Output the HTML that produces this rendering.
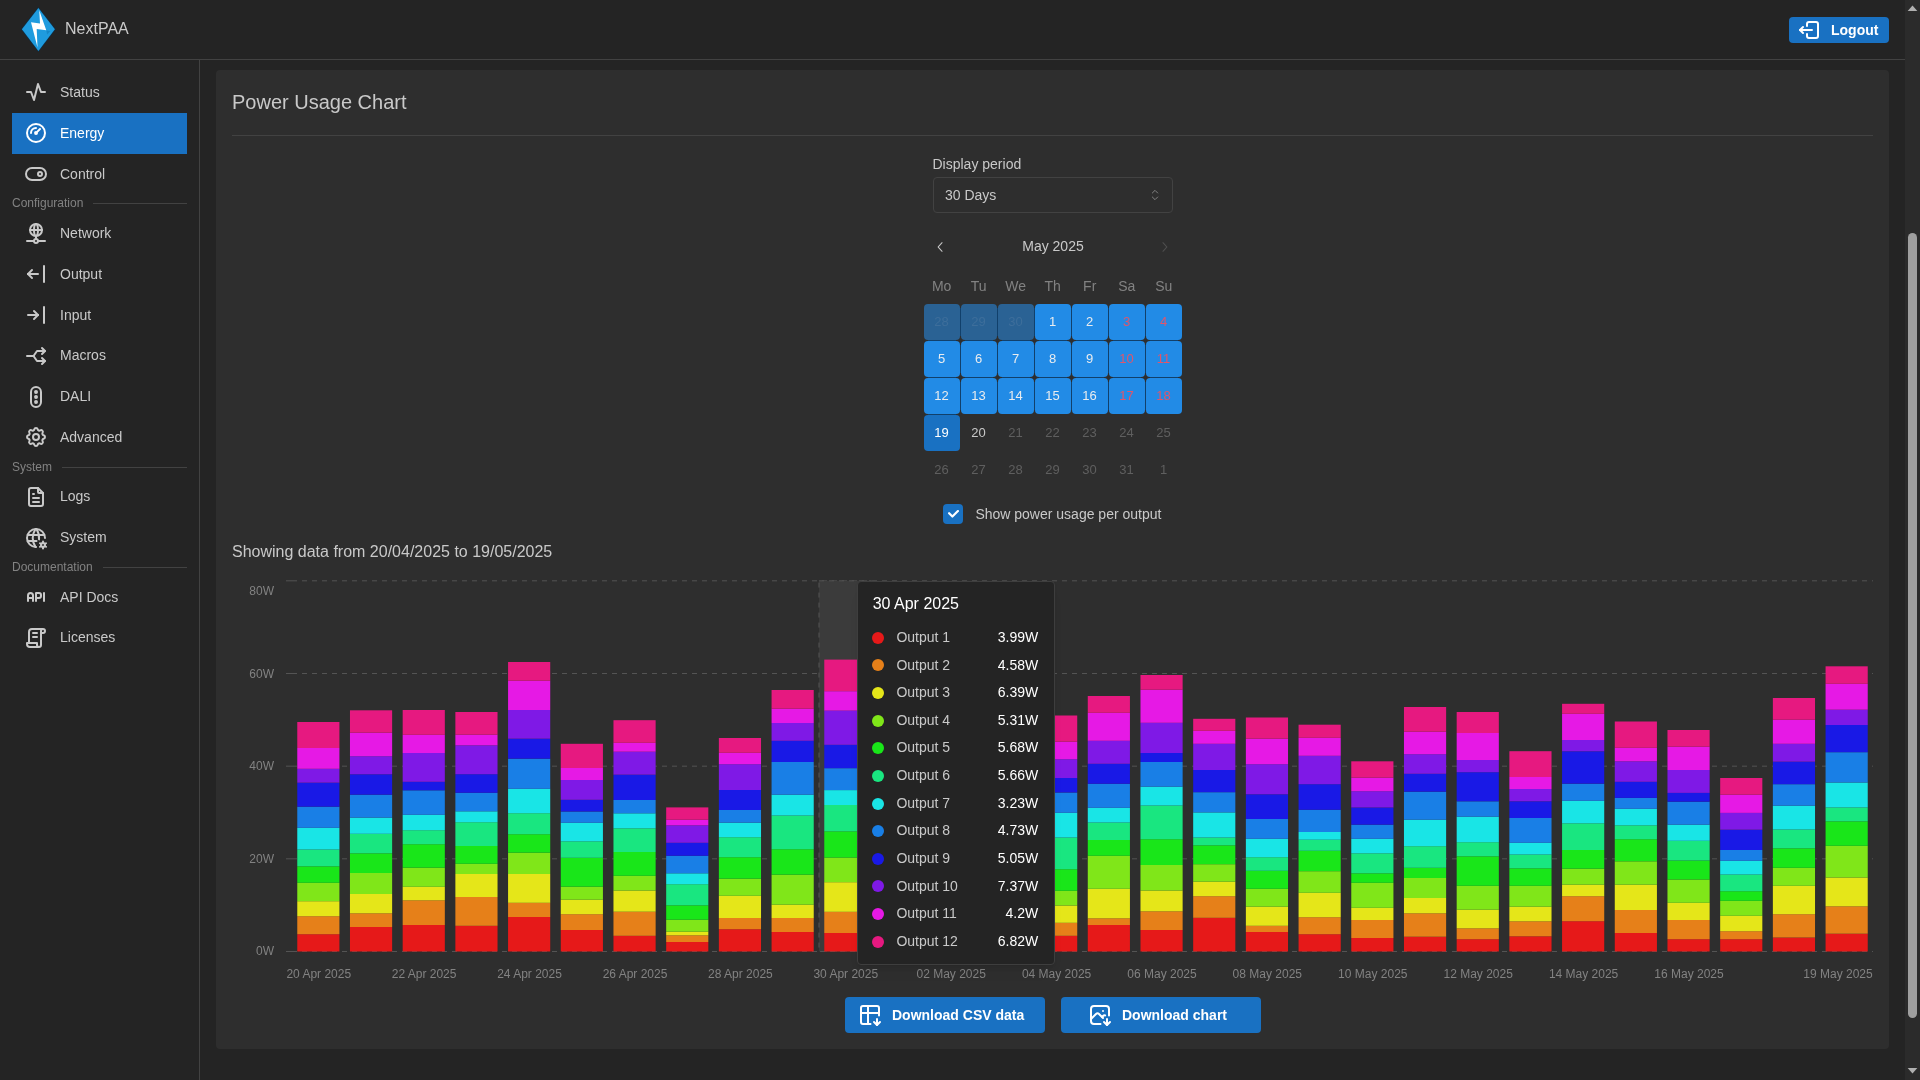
<!DOCTYPE html>
<html lang="en">
<head>
<meta charset="utf-8">
<title>NextPAA - Energy</title>
<style>
*{box-sizing:border-box;margin:0;padding:0}
html,body{width:1920px;height:1080px;overflow:hidden;background:#242424;color:#c9c9c9;
  font-family:"Liberation Sans",Arial,sans-serif;font-size:14px;-webkit-font-smoothing:antialiased}
#root{position:absolute;left:0;top:0;width:1920px;height:1080px;will-change:transform}
.abs{position:absolute}
svg.ti{fill:none;stroke:currentColor;stroke-width:2;stroke-linecap:round;stroke-linejoin:round}
/* header */
#header{position:absolute;left:0;top:0;width:1905px;height:60px;background:#242424;border-bottom:1px solid #424242}
#brand{position:absolute;left:65px;top:18px;font-size:16px;line-height:22px;color:#c9c9c9}
#logout{position:absolute;left:1789px;top:17px;width:100px;height:26px;border-radius:4px;background:#1971c2;color:#fff;
  font-weight:700;font-size:14px;line-height:26px}
#logout span{position:absolute;left:42px;top:0}
#logout svg{position:absolute;left:8px;top:1px;width:24px;height:24px}
/* sidebar */
#nav{position:absolute;left:0;top:60px;width:200px;height:1020px;background:#242424;border-right:1px solid #424242}
.nl{position:absolute;left:12px;width:175px;height:40.8px;color:#c9c9c9}
.nl svg{position:absolute;left:12px;top:8.4px;width:24px;height:24px}
.nl span{position:absolute;left:48px;top:0;line-height:40.8px;font-size:14px}
.nl.act{background:#1971c2;color:#fff}
.dv{position:absolute;left:12px;width:175px;height:18.6px;font-size:12px;line-height:18.6px;color:#828282}
.dv i{position:absolute;right:0;top:9px;height:1px;background:#424242}
/* main */
#card{position:absolute;left:216px;top:70px;width:1673px;height:979px;background:#2e2e2e;border-radius:4px}
#title{position:absolute;left:232px;top:88px;font-size:20px;line-height:28px;color:#c9c9c9}
#hr{position:absolute;left:232px;top:135px;width:1641px;height:1px;background:#424242}

/* controls */
#dp-label{position:absolute;left:932.5px;top:153px;font-size:14px;line-height:22px;color:#c9c9c9}
#sel{position:absolute;left:933px;top:177px;width:240px;height:36px;border:1px solid #424242;border-radius:4px;background:#2e2e2e;
  font-size:14px;line-height:34px;padding-left:11px;color:#c9c9c9}
#sel svg{position:absolute;right:9px;top:9px;width:16px;height:16px;color:#828282;stroke-width:1.5}
#cal-title{position:absolute;left:963px;top:235px;width:180px;text-align:center;font-size:14px;line-height:22px;color:#c9c9c9}
.chev{position:absolute;width:16px;height:16px}
.wd{position:absolute;top:275px;width:36px;text-align:center;font-size:14px;line-height:22px;color:#828282}
.d{position:absolute;width:36px;height:36px;padding-right:1px;border-radius:4px;text-align:center;font-size:13px;line-height:35px;color:#c9c9c9}
.d.r{background:#228be6;color:#e9ecef}
.d.r.we{color:#e0566b}
.d.r.out{background:#2a6294;color:#3d6e9b}
.g{position:absolute;background:#11406b}
.d.sel{background:#1971c2;color:#fff}
.d.dis{color:#5f5f5f}
#cb{position:absolute;left:943px;top:504px;width:20px;height:20px;border-radius:4px;background:#1971c2}
#cb svg{position:absolute;left:4.5px;top:6.2px;width:11px;height:7.7px}
#cb-label{position:absolute;left:975.4px;top:503px;font-size:14px;line-height:22px;color:#c9c9c9}
#showing{position:absolute;left:232px;top:539px;font-size:16px;line-height:25px;color:#c9c9c9}

/* tooltip */
#tt{position:absolute;left:857px;top:581px;width:198px;height:384px;background:#242424;border:1px solid #3e3e3e;border-radius:4px;
  box-shadow:0 1px 3px rgba(0,0,0,.05),0 10px 15px -5px rgba(0,0,0,.05),0 7px 7px -5px rgba(0,0,0,.04)}
#tt .t{position:absolute;left:14.7px;top:9.6px;font-size:16px;line-height:24.8px;color:#fff;font-weight:400}
#tt .r{position:absolute;left:13.9px;width:166.3px;height:21.7px;font-size:14px;line-height:21.7px;color:#c9c9c9}
#tt .r i{position:absolute;left:0.2px;top:4.85px;width:12px;height:12px;border-radius:50%}
#tt .r span{position:absolute;left:24.5px;top:0}
#tt .r b{position:absolute;right:0;top:0;font-weight:400;color:#fff}
/* buttons */
.btn{position:absolute;top:997px;width:200px;height:36px;border-radius:4px;background:#1971c2;color:#fff;font-weight:700;font-size:14px;line-height:36px}
.btn svg{position:absolute;top:6px;width:24px;height:24px}
.btn span{position:absolute;top:0;white-space:nowrap}
/* scrollbar */
#sb{position:absolute;left:1905px;top:0;width:15px;height:1080px;background:#2b2b2b}
#sb .th{position:absolute;left:3px;top:233px;width:9px;height:785px;border-radius:4.5px;background:#9f9f9f}
#sb svg{position:absolute;left:0;width:15px;height:15px}
</style>
</head>
<body>
<div id="root">
<!-- HEADER -->
<div id="header">
  <svg class="abs" style="left:18px;top:4px" width="42" height="52" viewBox="18 4 42 52">
    <polygon points="21.1,29.25 38.4,7.1 55.7,29.25 38.4,51.9" fill="#0c2f48"/>
    <polygon points="21.9,29.25 38.4,8.1 54.9,29.25 38.4,50.9" fill="#1f9bde"/>
    <polygon points="46.25,30.25 50.3,31.3 47.2,34.6" fill="#1787c6"/>
    <polygon points="39.25,10.25 46.25,30.25 36.7,29 37.5,47.5 31,22.25 40,23.5" fill="#ffffff"/>
  </svg>
  <div id="brand">NextPAA</div>
  <div id="logout">
    <svg class="ti" viewBox="0 0 24 24"><path d="M10 8v-2a2 2 0 0 1 2 -2h7a2 2 0 0 1 2 2v12a2 2 0 0 1 -2 2h-7a2 2 0 0 1 -2 -2v-2"/><path d="M15 12h-12l3 -3"/><path d="M6 15l-3 -3"/></svg>
    <span>Logout</span>
  </div>
</div>
<!-- SIDEBAR -->
<div id="nav">
  <div class="nl" style="top:12px"><svg class="ti" viewBox="0 0 24 24"><path d="M3 12h4l3 8l4 -16l3 8h4"/></svg><span>Status</span></div>
  <div class="nl act" style="top:52.8px"><svg class="ti" viewBox="0 0 24 24"><path d="M3 12a9 9 0 1 0 18 0a9 9 0 1 0 -18 0"/><path d="M11 12a1 1 0 1 0 2 0a1 1 0 1 0 -2 0"/><path d="M13.41 10.59l2.59 -2.59"/><path d="M7 12a5 5 0 0 1 5 -5"/></svg><span>Energy</span></div>
  <div class="nl" style="top:93.6px"><svg class="ti" viewBox="0 0 24 24"><path d="M14 12a2 2 0 1 0 4 0a2 2 0 1 0 -4 0"/><path d="M2 12a6 6 0 0 1 6 -6h8a6 6 0 0 1 6 6a6 6 0 0 1 -6 6h-8a6 6 0 0 1 -6 -6z"/></svg><span>Control</span></div>
  <div class="dv" style="top:134.4px">Configuration<i style="width:94px"></i></div>
  <div class="nl" style="top:153px"><svg class="ti" viewBox="0 0 24 24"><path d="M6 9a6 6 0 1 0 12 0a6 6 0 0 0 -12 0"/><path d="M12 3c1.333 .333 2 2.333 2 6s-.667 5.667 -2 6"/><path d="M12 3c-1.333 .333 -2 2.333 -2 6s.667 5.667 2 6"/><path d="M6 9h12"/><path d="M3 20h7"/><path d="M14 20h7"/><path d="M10 20a2 2 0 1 0 4 0a2 2 0 0 0 -4 0"/><path d="M12 15v3"/></svg><span>Network</span></div>
  <div class="nl" style="top:193.8px"><svg class="ti" viewBox="0 0 24 24"><path d="M4 12l10 0"/><path d="M4 12l4 4"/><path d="M4 12l4 -4"/><path d="M20 4l0 16"/></svg><span>Output</span></div>
  <div class="nl" style="top:234.6px"><svg class="ti" viewBox="0 0 24 24"><path d="M14 12l-10 0"/><path d="M14 12l-4 4"/><path d="M14 12l-4 -4"/><path d="M20 4l0 16"/></svg><span>Input</span></div>
  <div class="nl" style="top:275.4px"><svg class="ti" viewBox="0 0 24 24"><path d="M21 17h-8l-3.5 -5h-6.5"/><path d="M21 7h-8l-3.495 5"/><path d="M18 10l3 -3l-3 -3"/><path d="M18 20l3 -3l-3 -3"/></svg><span>Macros</span></div>
  <div class="nl" style="top:316.2px"><svg class="ti" viewBox="0 0 24 24"><path d="M7 7a5 5 0 0 1 10 0v10a5 5 0 0 1 -10 0z"/><path d="M11 7a1 1 0 1 0 2 0a1 1 0 1 0 -2 0"/><path d="M11 12a1 1 0 1 0 2 0a1 1 0 1 0 -2 0"/><path d="M11 17a1 1 0 1 0 2 0a1 1 0 1 0 -2 0"/></svg><span>DALI</span></div>
  <div class="nl" style="top:357px"><svg class="ti" viewBox="0 0 24 24"><path d="M10.325 4.317c.426 -1.756 2.924 -1.756 3.35 0a1.724 1.724 0 0 0 2.573 1.066c1.543 -.94 3.31 .826 2.37 2.37a1.724 1.724 0 0 0 1.065 2.572c1.756 .426 1.756 2.924 0 3.35a1.724 1.724 0 0 0 -1.066 2.573c.94 1.543 -.826 3.31 -2.37 2.37a1.724 1.724 0 0 0 -2.572 1.065c-.426 1.756 -2.924 1.756 -3.35 0a1.724 1.724 0 0 0 -2.573 -1.066c-1.543 .94 -3.31 -.826 -2.37 -2.37a1.724 1.724 0 0 0 -1.065 -2.572c-1.756 -.426 -1.756 -2.924 0 -3.35a1.724 1.724 0 0 0 1.066 -2.573c-.94 -1.543 .826 -3.31 2.37 -2.37c1 .608 2.296 .07 2.572 -1.065z"/><path d="M9 12a3 3 0 1 0 6 0a3 3 0 0 0 -6 0"/></svg><span>Advanced</span></div>
  <div class="dv" style="top:397.8px">System<i style="width:125px"></i></div>
  <div class="nl" style="top:416.4px"><svg class="ti" viewBox="0 0 24 24"><path d="M14 3v4a1 1 0 0 0 1 1h4"/><path d="M17 21h-10a2 2 0 0 1 -2 -2v-14a2 2 0 0 1 2 -2h7l5 5v11a2 2 0 0 1 -2 2z"/><path d="M9 9l1 0"/><path d="M9 13l6 0"/><path d="M9 17l6 0"/></svg><span>Logs</span></div>
  <div class="nl" style="top:457.2px"><svg class="ti" viewBox="0 0 24 24"><path d="M21 12a9 9 0 1 0 -8.979 9"/><path d="M3.6 9h16.8"/><path d="M3.6 15h8.9"/><path d="M11.5 3a17 17 0 0 0 0 18"/><path d="M12.5 3a16.992 16.992 0 0 1 2.522 10.376"/><path d="M17.001 19a2 2 0 1 0 4 0a2 2 0 1 0 -4 0"/><path d="M19.001 15.5v1.5"/><path d="M19.001 21v1.5"/><path d="M22.032 17.25l-1.299 .75"/><path d="M17.27 20l-1.3 .75"/><path d="M15.97 17.25l1.3 .75"/><path d="M20.733 20l1.3 .75"/></svg><span>System</span></div>
  <div class="dv" style="top:498px">Documentation<i style="width:84px"></i></div>
  <div class="nl" style="top:516.6px"><svg class="ti" viewBox="0 0 24 24"><path d="M4 13h5"/><path d="M12 16v-8h3a2 2 0 0 1 2 2v1a2 2 0 0 1 -2 2h-3"/><path d="M20 8v8"/><path d="M9 16v-5.500a2.500 2.500 0 0 0 -5 0v5.500"/></svg><span>API Docs</span></div>
  <div class="nl" style="top:557.4px"><svg class="ti" viewBox="0 0 24 24"><path d="M15 21h-9a3 3 0 0 1 -3 -3v-1h10v2a2 2 0 0 0 4 0v-14a2 2 0 1 1 2 2h-2m2 -4h-11a3 3 0 0 0 -3 3v11"/><path d="M9 7l4 0"/><path d="M9 11l4 0"/></svg><span>Licenses</span></div>
</div>
<!-- MAIN -->
<div id="card"></div>
<div id="title">Power Usage Chart</div>
<div id="hr"></div>
<!--CONTROLS-->
<div id="dp-label">Display period</div>
<div id="sel">30 Days<svg class="ti" viewBox="0 0 24 24"><path d="M8 9l4 -4l4 4"/><path d="M16 15l-4 4l-4 -4"/></svg></div>
<svg class="chev" style="left:933px;top:239px;color:#c9c9c9" viewBox="0 0 15 15"><path transform="rotate(90 7.5 7.5)" fill="currentColor" fill-rule="evenodd" clip-rule="evenodd" d="M3.13523 6.15803C3.3241 5.95657 3.64052 5.94637 3.84197 6.13523L7.5 9.56464L11.158 6.13523C11.3595 5.94637 11.6759 5.95657 11.8648 6.15803C12.0536 6.35949 12.0434 6.67591 11.842 6.86477L7.84197 10.6148C7.64964 10.7951 7.35036 10.7951 7.15803 10.6148L3.15803 6.86477C2.95657 6.67591 2.94637 6.35949 3.13523 6.15803Z"/></svg>
<div id="cal-title">May 2025</div>
<svg class="chev" style="left:1156px;top:239px;color:#4f4f4f" viewBox="0 0 15 15"><path transform="rotate(-90 7.5 7.5)" fill="currentColor" fill-rule="evenodd" clip-rule="evenodd" d="M3.13523 6.15803C3.3241 5.95657 3.64052 5.94637 3.84197 6.13523L7.5 9.56464L11.158 6.13523C11.3595 5.94637 11.6759 5.95657 11.8648 6.15803C12.0536 6.35949 12.0434 6.67591 11.842 6.86477L7.84197 10.6148C7.64964 10.7951 7.35036 10.7951 7.15803 10.6148L3.15803 6.86477C2.95657 6.67591 2.94637 6.35949 3.13523 6.15803Z"/></svg>
<div class="wd" style="left:923.7px">Mo</div>
<div class="wd" style="left:960.7px">Tu</div>
<div class="wd" style="left:997.7px">We</div>
<div class="wd" style="left:1034.7px">Th</div>
<div class="wd" style="left:1071.7px">Fr</div>
<div class="wd" style="left:1108.7px">Sa</div>
<div class="wd" style="left:1145.7px">Su</div>
<div class="d r out" style="left:924px;top:304px">28</div>
<div class="d r out" style="left:961px;top:304px">29</div>
<div class="d r out" style="left:998px;top:304px">30</div>
<div class="d r" style="left:1035px;top:304px">1</div>
<div class="d r" style="left:1072px;top:304px">2</div>
<div class="d r we" style="left:1109px;top:304px">3</div>
<div class="d r we" style="left:1146px;top:304px">4</div>
<div class="d r" style="left:924px;top:341px">5</div>
<div class="d r" style="left:961px;top:341px">6</div>
<div class="d r" style="left:998px;top:341px">7</div>
<div class="d r" style="left:1035px;top:341px">8</div>
<div class="d r" style="left:1072px;top:341px">9</div>
<div class="d r we" style="left:1109px;top:341px">10</div>
<div class="d r we" style="left:1146px;top:341px">11</div>
<div class="d r" style="left:924px;top:378px">12</div>
<div class="d r" style="left:961px;top:378px">13</div>
<div class="d r" style="left:998px;top:378px">14</div>
<div class="d r" style="left:1035px;top:378px">15</div>
<div class="d r" style="left:1072px;top:378px">16</div>
<div class="d r we" style="left:1109px;top:378px">17</div>
<div class="d r we" style="left:1146px;top:378px">18</div>
<div class="d sel" style="left:924px;top:415px">19</div>
<div class="d" style="left:961px;top:415px">20</div>
<div class="d dis" style="left:998px;top:415px">21</div>
<div class="d dis" style="left:1035px;top:415px">22</div>
<div class="d dis" style="left:1072px;top:415px">23</div>
<div class="d dis" style="left:1109px;top:415px">24</div>
<div class="d dis" style="left:1146px;top:415px">25</div>
<div class="d dis" style="left:924px;top:452px">26</div>
<div class="d dis" style="left:961px;top:452px">27</div>
<div class="d dis" style="left:998px;top:452px">28</div>
<div class="d dis" style="left:1035px;top:452px">29</div>
<div class="d dis" style="left:1072px;top:452px">30</div>
<div class="d dis" style="left:1109px;top:452px">31</div>
<div class="d dis" style="left:1146px;top:452px">1</div>
<div class="g" style="left:960px;top:308px;width:1px;height:28px"></div>
<div class="g" style="left:997px;top:308px;width:1px;height:28px"></div>
<div class="g" style="left:1034px;top:308px;width:1px;height:28px"></div>
<div class="g" style="left:1071px;top:308px;width:1px;height:28px"></div>
<div class="g" style="left:1108px;top:308px;width:1px;height:28px"></div>
<div class="g" style="left:1145px;top:308px;width:1px;height:28px"></div>
<div class="g" style="left:960px;top:345px;width:1px;height:28px"></div>
<div class="g" style="left:997px;top:345px;width:1px;height:28px"></div>
<div class="g" style="left:1034px;top:345px;width:1px;height:28px"></div>
<div class="g" style="left:1071px;top:345px;width:1px;height:28px"></div>
<div class="g" style="left:1108px;top:345px;width:1px;height:28px"></div>
<div class="g" style="left:1145px;top:345px;width:1px;height:28px"></div>
<div class="g" style="left:960px;top:382px;width:1px;height:28px"></div>
<div class="g" style="left:997px;top:382px;width:1px;height:28px"></div>
<div class="g" style="left:1034px;top:382px;width:1px;height:28px"></div>
<div class="g" style="left:1071px;top:382px;width:1px;height:28px"></div>
<div class="g" style="left:1108px;top:382px;width:1px;height:28px"></div>
<div class="g" style="left:1145px;top:382px;width:1px;height:28px"></div>
<div class="g" style="left:928px;top:340px;width:28px;height:1px"></div>
<div class="g" style="left:965px;top:340px;width:28px;height:1px"></div>
<div class="g" style="left:1002px;top:340px;width:28px;height:1px"></div>
<div class="g" style="left:1039px;top:340px;width:28px;height:1px"></div>
<div class="g" style="left:1076px;top:340px;width:28px;height:1px"></div>
<div class="g" style="left:1113px;top:340px;width:28px;height:1px"></div>
<div class="g" style="left:1150px;top:340px;width:28px;height:1px"></div>
<div class="g" style="left:928px;top:377px;width:28px;height:1px"></div>
<div class="g" style="left:965px;top:377px;width:28px;height:1px"></div>
<div class="g" style="left:1002px;top:377px;width:28px;height:1px"></div>
<div class="g" style="left:1039px;top:377px;width:28px;height:1px"></div>
<div class="g" style="left:1076px;top:377px;width:28px;height:1px"></div>
<div class="g" style="left:1113px;top:377px;width:28px;height:1px"></div>
<div class="g" style="left:1150px;top:377px;width:28px;height:1px"></div>
<div class="g" style="left:928px;top:414px;width:28px;height:1px"></div>
<div id="cb"><svg viewBox="0 0 10 7"><path fill="#fff" fill-rule="evenodd" clip-rule="evenodd" d="M4 4.586L1.707 2.293A1 1 0 1 0 .293 3.707l3 3a.997.997 0 0 0 1.414 0l5-5A1 1 0 1 0 8.293.293L4 4.586z"/></svg></div>
<div id="cb-label">Show power usage per output</div>
<div id="showing">Showing data from 20/04/2025 to 19/05/2025</div>
<!--CHART-->
<svg id="chart" class="abs" style="left:0;top:560px" width="1905" height="440" viewBox="0 560 1905 440" font-family="&quot;Liberation Sans&quot;,Arial,sans-serif" font-size="12">
<line x1="292" x2="1873" y1="951.50" y2="951.50" stroke="#545454" stroke-width="1" stroke-dasharray="5 5"/>
<line x1="286" x2="292" y1="951.50" y2="951.50" stroke="#545454" stroke-width="1"/>
<text x="274" y="955.0" text-anchor="end" fill="#828282">0W</text>
<line x1="292" x2="1873" y1="858.83" y2="858.83" stroke="#545454" stroke-width="1" stroke-dasharray="5 5"/>
<line x1="286" x2="292" y1="858.83" y2="858.83" stroke="#545454" stroke-width="1"/>
<text x="274" y="863.0" text-anchor="end" fill="#828282">20W</text>
<line x1="292" x2="1873" y1="766.17" y2="766.17" stroke="#545454" stroke-width="1" stroke-dasharray="5 5"/>
<line x1="286" x2="292" y1="766.17" y2="766.17" stroke="#545454" stroke-width="1"/>
<text x="274" y="770.0" text-anchor="end" fill="#828282">40W</text>
<line x1="292" x2="1873" y1="673.50" y2="673.50" stroke="#545454" stroke-width="1" stroke-dasharray="5 5"/>
<line x1="286" x2="292" y1="673.50" y2="673.50" stroke="#545454" stroke-width="1"/>
<text x="274" y="678.0" text-anchor="end" fill="#828282">60W</text>
<line x1="292" x2="1873" y1="580.83" y2="580.83" stroke="#545454" stroke-width="1" stroke-dasharray="5 5"/>
<line x1="286" x2="292" y1="580.83" y2="580.83" stroke="#545454" stroke-width="1"/>
<text x="274" y="595.0" text-anchor="end" fill="#828282">80W</text>
<rect x="819.00" y="580.83" width="52.70" height="370.67" fill="#3b3b3b" stroke="#545454" stroke-width="1" stroke-dasharray="5 5"/>
<rect x="297.27" y="934.2" width="42.16" height="17.3" fill="#e61919"/>
<rect x="297.27" y="916.2" width="42.16" height="18.0" fill="#e68019"/>
<rect x="297.27" y="901.2" width="42.16" height="15.0" fill="#e5e619"/>
<rect x="297.27" y="882.8" width="42.16" height="18.4" fill="#80e619"/>
<rect x="297.27" y="866.3" width="42.16" height="16.5" fill="#19e619"/>
<rect x="297.27" y="849.5" width="42.16" height="16.8" fill="#19e680"/>
<rect x="297.27" y="827.8" width="42.16" height="21.7" fill="#19e5e6"/>
<rect x="297.27" y="806.7" width="42.16" height="21.1" fill="#197fe6"/>
<rect x="297.27" y="782.7" width="42.16" height="24.0" fill="#1919e6"/>
<rect x="297.27" y="768.8" width="42.16" height="13.9" fill="#7f19e6"/>
<rect x="297.27" y="748.0" width="42.16" height="20.8" fill="#e619e5"/>
<rect x="297.27" y="722.0" width="42.16" height="26.0" fill="#e61980"/>
<rect x="349.97" y="927.0" width="42.16" height="24.5" fill="#e61919"/>
<rect x="349.97" y="913.3" width="42.16" height="13.7" fill="#e68019"/>
<rect x="349.97" y="894.0" width="42.16" height="19.3" fill="#e5e619"/>
<rect x="349.97" y="873.0" width="42.16" height="21.0" fill="#80e619"/>
<rect x="349.97" y="853.3" width="42.16" height="19.7" fill="#19e619"/>
<rect x="349.97" y="833.8" width="42.16" height="19.5" fill="#19e680"/>
<rect x="349.97" y="817.6" width="42.16" height="16.2" fill="#19e5e6"/>
<rect x="349.97" y="794.7" width="42.16" height="22.9" fill="#197fe6"/>
<rect x="349.97" y="774.3" width="42.16" height="20.4" fill="#1919e6"/>
<rect x="349.97" y="756.2" width="42.16" height="18.1" fill="#7f19e6"/>
<rect x="349.97" y="732.7" width="42.16" height="23.5" fill="#e619e5"/>
<rect x="349.97" y="710.3" width="42.16" height="22.4" fill="#e61980"/>
<rect x="402.67" y="925.0" width="42.16" height="26.5" fill="#e61919"/>
<rect x="402.67" y="900.3" width="42.16" height="24.7" fill="#e68019"/>
<rect x="402.67" y="886.8" width="42.16" height="13.5" fill="#e5e619"/>
<rect x="402.67" y="867.7" width="42.16" height="19.1" fill="#80e619"/>
<rect x="402.67" y="844.2" width="42.16" height="23.5" fill="#19e619"/>
<rect x="402.67" y="830.2" width="42.16" height="14.0" fill="#19e680"/>
<rect x="402.67" y="814.8" width="42.16" height="15.4" fill="#19e5e6"/>
<rect x="402.67" y="790.3" width="42.16" height="24.5" fill="#197fe6"/>
<rect x="402.67" y="781.8" width="42.16" height="8.5" fill="#1919e6"/>
<rect x="402.67" y="753.0" width="42.16" height="28.8" fill="#7f19e6"/>
<rect x="402.67" y="734.8" width="42.16" height="18.2" fill="#e619e5"/>
<rect x="402.67" y="710.0" width="42.16" height="24.8" fill="#e61980"/>
<rect x="455.37" y="925.8" width="42.16" height="25.7" fill="#e61919"/>
<rect x="455.37" y="897.0" width="42.16" height="28.8" fill="#e68019"/>
<rect x="455.37" y="874.0" width="42.16" height="23.0" fill="#e5e619"/>
<rect x="455.37" y="863.8" width="42.16" height="10.2" fill="#80e619"/>
<rect x="455.37" y="846.0" width="42.16" height="17.8" fill="#19e619"/>
<rect x="455.37" y="822.2" width="42.16" height="23.8" fill="#19e680"/>
<rect x="455.37" y="811.3" width="42.16" height="10.9" fill="#19e5e6"/>
<rect x="455.37" y="792.8" width="42.16" height="18.5" fill="#197fe6"/>
<rect x="455.37" y="774.2" width="42.16" height="18.6" fill="#1919e6"/>
<rect x="455.37" y="745.3" width="42.16" height="28.9" fill="#7f19e6"/>
<rect x="455.37" y="734.7" width="42.16" height="10.6" fill="#e619e5"/>
<rect x="455.37" y="712.0" width="42.16" height="22.7" fill="#e61980"/>
<rect x="508.07" y="917.0" width="42.16" height="34.5" fill="#e61919"/>
<rect x="508.07" y="902.8" width="42.16" height="14.2" fill="#e68019"/>
<rect x="508.07" y="874.0" width="42.16" height="28.8" fill="#e5e619"/>
<rect x="508.07" y="852.7" width="42.16" height="21.3" fill="#80e619"/>
<rect x="508.07" y="834.2" width="42.16" height="18.5" fill="#19e619"/>
<rect x="508.07" y="813.2" width="42.16" height="21.0" fill="#19e680"/>
<rect x="508.07" y="788.8" width="42.16" height="24.4" fill="#19e5e6"/>
<rect x="508.07" y="758.7" width="42.16" height="30.1" fill="#197fe6"/>
<rect x="508.07" y="738.7" width="42.16" height="20.0" fill="#1919e6"/>
<rect x="508.07" y="710.0" width="42.16" height="28.7" fill="#7f19e6"/>
<rect x="508.07" y="680.7" width="42.16" height="29.3" fill="#e619e5"/>
<rect x="508.07" y="662.0" width="42.16" height="18.7" fill="#e61980"/>
<rect x="560.77" y="930.0" width="42.16" height="21.5" fill="#e61919"/>
<rect x="560.77" y="914.2" width="42.16" height="15.8" fill="#e68019"/>
<rect x="560.77" y="899.7" width="42.16" height="14.5" fill="#e5e619"/>
<rect x="560.77" y="886.7" width="42.16" height="13.0" fill="#80e619"/>
<rect x="560.77" y="857.8" width="42.16" height="28.9" fill="#19e619"/>
<rect x="560.77" y="841.3" width="42.16" height="16.5" fill="#19e680"/>
<rect x="560.77" y="822.8" width="42.16" height="18.5" fill="#19e5e6"/>
<rect x="560.77" y="811.5" width="42.16" height="11.3" fill="#197fe6"/>
<rect x="560.77" y="799.8" width="42.16" height="11.7" fill="#1919e6"/>
<rect x="560.77" y="780.0" width="42.16" height="19.8" fill="#7f19e6"/>
<rect x="560.77" y="768.0" width="42.16" height="12.0" fill="#e619e5"/>
<rect x="560.77" y="743.8" width="42.16" height="24.2" fill="#e61980"/>
<rect x="613.47" y="935.8" width="42.16" height="15.7" fill="#e61919"/>
<rect x="613.47" y="911.7" width="42.16" height="24.1" fill="#e68019"/>
<rect x="613.47" y="890.5" width="42.16" height="21.2" fill="#e5e619"/>
<rect x="613.47" y="875.8" width="42.16" height="14.7" fill="#80e619"/>
<rect x="613.47" y="852.0" width="42.16" height="23.8" fill="#19e619"/>
<rect x="613.47" y="828.3" width="42.16" height="23.7" fill="#19e680"/>
<rect x="613.47" y="813.3" width="42.16" height="15.0" fill="#19e5e6"/>
<rect x="613.47" y="800.0" width="42.16" height="13.3" fill="#197fe6"/>
<rect x="613.47" y="774.7" width="42.16" height="25.3" fill="#1919e6"/>
<rect x="613.47" y="751.7" width="42.16" height="23.0" fill="#7f19e6"/>
<rect x="613.47" y="742.8" width="42.16" height="8.9" fill="#e619e5"/>
<rect x="613.47" y="720.2" width="42.16" height="22.6" fill="#e61980"/>
<rect x="666.17" y="942.0" width="42.16" height="9.5" fill="#e61919"/>
<rect x="666.17" y="935.3" width="42.16" height="6.7" fill="#e68019"/>
<rect x="666.17" y="931.7" width="42.16" height="3.6" fill="#e5e619"/>
<rect x="666.17" y="919.7" width="42.16" height="12.0" fill="#80e619"/>
<rect x="666.17" y="905.3" width="42.16" height="14.4" fill="#19e619"/>
<rect x="666.17" y="884.2" width="42.16" height="21.1" fill="#19e680"/>
<rect x="666.17" y="873.3" width="42.16" height="10.9" fill="#19e5e6"/>
<rect x="666.17" y="855.8" width="42.16" height="17.5" fill="#197fe6"/>
<rect x="666.17" y="842.8" width="42.16" height="13.0" fill="#1919e6"/>
<rect x="666.17" y="825.3" width="42.16" height="17.5" fill="#7f19e6"/>
<rect x="666.17" y="819.7" width="42.16" height="5.6" fill="#e619e5"/>
<rect x="666.17" y="807.4" width="42.16" height="12.3" fill="#e61980"/>
<rect x="718.87" y="929.2" width="42.16" height="22.3" fill="#e61919"/>
<rect x="718.87" y="918.0" width="42.16" height="11.2" fill="#e68019"/>
<rect x="718.87" y="895.8" width="42.16" height="22.2" fill="#e5e619"/>
<rect x="718.87" y="878.7" width="42.16" height="17.1" fill="#80e619"/>
<rect x="718.87" y="857.2" width="42.16" height="21.5" fill="#19e619"/>
<rect x="718.87" y="837.2" width="42.16" height="20.0" fill="#19e680"/>
<rect x="718.87" y="822.7" width="42.16" height="14.5" fill="#19e5e6"/>
<rect x="718.87" y="810.0" width="42.16" height="12.7" fill="#197fe6"/>
<rect x="718.87" y="790.0" width="42.16" height="20.0" fill="#1919e6"/>
<rect x="718.87" y="764.2" width="42.16" height="25.8" fill="#7f19e6"/>
<rect x="718.87" y="752.8" width="42.16" height="11.4" fill="#e619e5"/>
<rect x="718.87" y="738.0" width="42.16" height="14.8" fill="#e61980"/>
<rect x="771.57" y="932.0" width="42.16" height="19.5" fill="#e61919"/>
<rect x="771.57" y="918.0" width="42.16" height="14.0" fill="#e68019"/>
<rect x="771.57" y="904.7" width="42.16" height="13.3" fill="#e5e619"/>
<rect x="771.57" y="874.7" width="42.16" height="30.0" fill="#80e619"/>
<rect x="771.57" y="849.2" width="42.16" height="25.5" fill="#19e619"/>
<rect x="771.57" y="815.5" width="42.16" height="33.7" fill="#19e680"/>
<rect x="771.57" y="794.7" width="42.16" height="20.8" fill="#19e5e6"/>
<rect x="771.57" y="762.0" width="42.16" height="32.7" fill="#197fe6"/>
<rect x="771.57" y="740.8" width="42.16" height="21.2" fill="#1919e6"/>
<rect x="771.57" y="723.0" width="42.16" height="17.8" fill="#7f19e6"/>
<rect x="771.57" y="708.7" width="42.16" height="14.3" fill="#e619e5"/>
<rect x="771.57" y="690.0" width="42.16" height="18.7" fill="#e61980"/>
<rect x="824.27" y="933.0" width="42.16" height="18.5" fill="#e61919"/>
<rect x="824.27" y="911.8" width="42.16" height="21.2" fill="#e68019"/>
<rect x="824.27" y="882.2" width="42.16" height="29.6" fill="#e5e619"/>
<rect x="824.27" y="857.6" width="42.16" height="24.6" fill="#80e619"/>
<rect x="824.27" y="831.3" width="42.16" height="26.3" fill="#19e619"/>
<rect x="824.27" y="805.0" width="42.16" height="26.3" fill="#19e680"/>
<rect x="824.27" y="790.1" width="42.16" height="14.9" fill="#19e5e6"/>
<rect x="824.27" y="768.2" width="42.16" height="21.9" fill="#197fe6"/>
<rect x="824.27" y="744.8" width="42.16" height="23.4" fill="#1919e6"/>
<rect x="824.27" y="710.6" width="42.16" height="34.2" fill="#7f19e6"/>
<rect x="824.27" y="691.2" width="42.16" height="19.4" fill="#e619e5"/>
<rect x="824.27" y="659.6" width="42.16" height="31.6" fill="#e61980"/>
<rect x="876.97" y="931.0" width="42.16" height="20.5" fill="#e61919"/>
<rect x="876.97" y="910.0" width="42.16" height="21.0" fill="#e68019"/>
<rect x="876.97" y="889.0" width="42.16" height="21.0" fill="#e5e619"/>
<rect x="876.97" y="866.0" width="42.16" height="23.0" fill="#80e619"/>
<rect x="876.97" y="847.0" width="42.16" height="19.0" fill="#19e619"/>
<rect x="876.97" y="825.0" width="42.16" height="22.0" fill="#19e680"/>
<rect x="876.97" y="803.0" width="42.16" height="22.0" fill="#19e5e6"/>
<rect x="876.97" y="783.0" width="42.16" height="20.0" fill="#197fe6"/>
<rect x="876.97" y="761.0" width="42.16" height="22.0" fill="#1919e6"/>
<rect x="876.97" y="739.0" width="42.16" height="22.0" fill="#7f19e6"/>
<rect x="876.97" y="718.0" width="42.16" height="21.0" fill="#e619e5"/>
<rect x="876.97" y="699.0" width="42.16" height="19.0" fill="#e61980"/>
<rect x="929.67" y="934.0" width="42.16" height="17.5" fill="#e61919"/>
<rect x="929.67" y="915.0" width="42.16" height="19.0" fill="#e68019"/>
<rect x="929.67" y="893.0" width="42.16" height="22.0" fill="#e5e619"/>
<rect x="929.67" y="874.0" width="42.16" height="19.0" fill="#80e619"/>
<rect x="929.67" y="852.0" width="42.16" height="22.0" fill="#19e619"/>
<rect x="929.67" y="833.0" width="42.16" height="19.0" fill="#19e680"/>
<rect x="929.67" y="812.0" width="42.16" height="21.0" fill="#19e5e6"/>
<rect x="929.67" y="791.0" width="42.16" height="21.0" fill="#197fe6"/>
<rect x="929.67" y="770.0" width="42.16" height="21.0" fill="#1919e6"/>
<rect x="929.67" y="746.0" width="42.16" height="24.0" fill="#7f19e6"/>
<rect x="929.67" y="727.0" width="42.16" height="19.0" fill="#e619e5"/>
<rect x="929.67" y="705.0" width="42.16" height="22.0" fill="#e61980"/>
<rect x="982.37" y="936.0" width="42.16" height="15.5" fill="#e61919"/>
<rect x="982.37" y="918.0" width="42.16" height="18.0" fill="#e68019"/>
<rect x="982.37" y="899.0" width="42.16" height="19.0" fill="#e5e619"/>
<rect x="982.37" y="879.0" width="42.16" height="20.0" fill="#80e619"/>
<rect x="982.37" y="860.0" width="42.16" height="19.0" fill="#19e619"/>
<rect x="982.37" y="841.0" width="42.16" height="19.0" fill="#19e680"/>
<rect x="982.37" y="822.0" width="42.16" height="19.0" fill="#19e5e6"/>
<rect x="982.37" y="804.0" width="42.16" height="18.0" fill="#197fe6"/>
<rect x="982.37" y="785.0" width="42.16" height="19.0" fill="#1919e6"/>
<rect x="982.37" y="765.0" width="42.16" height="20.0" fill="#7f19e6"/>
<rect x="982.37" y="748.0" width="42.16" height="17.0" fill="#e619e5"/>
<rect x="982.37" y="729.0" width="42.16" height="19.0" fill="#e61980"/>
<rect x="1035.07" y="935.8" width="42.16" height="15.7" fill="#e61919"/>
<rect x="1035.07" y="922.8" width="42.16" height="13.0" fill="#e68019"/>
<rect x="1035.07" y="905.5" width="42.16" height="17.3" fill="#e5e619"/>
<rect x="1035.07" y="890.8" width="42.16" height="14.7" fill="#80e619"/>
<rect x="1035.07" y="869.2" width="42.16" height="21.6" fill="#19e619"/>
<rect x="1035.07" y="837.5" width="42.16" height="31.7" fill="#19e680"/>
<rect x="1035.07" y="812.8" width="42.16" height="24.7" fill="#19e5e6"/>
<rect x="1035.07" y="792.5" width="42.16" height="20.3" fill="#197fe6"/>
<rect x="1035.07" y="778.0" width="42.16" height="14.5" fill="#1919e6"/>
<rect x="1035.07" y="759.2" width="42.16" height="18.8" fill="#7f19e6"/>
<rect x="1035.07" y="741.7" width="42.16" height="17.5" fill="#e619e5"/>
<rect x="1035.07" y="715.5" width="42.16" height="26.2" fill="#e61980"/>
<rect x="1087.77" y="925.0" width="42.16" height="26.5" fill="#e61919"/>
<rect x="1087.77" y="918.3" width="42.16" height="6.7" fill="#e68019"/>
<rect x="1087.77" y="888.8" width="42.16" height="29.5" fill="#e5e619"/>
<rect x="1087.77" y="855.8" width="42.16" height="33.0" fill="#80e619"/>
<rect x="1087.77" y="840.0" width="42.16" height="15.8" fill="#19e619"/>
<rect x="1087.77" y="822.5" width="42.16" height="17.5" fill="#19e680"/>
<rect x="1087.77" y="807.8" width="42.16" height="14.7" fill="#19e5e6"/>
<rect x="1087.77" y="783.8" width="42.16" height="24.0" fill="#197fe6"/>
<rect x="1087.77" y="763.8" width="42.16" height="20.0" fill="#1919e6"/>
<rect x="1087.77" y="740.8" width="42.16" height="23.0" fill="#7f19e6"/>
<rect x="1087.77" y="712.8" width="42.16" height="28.0" fill="#e619e5"/>
<rect x="1087.77" y="696.0" width="42.16" height="16.8" fill="#e61980"/>
<rect x="1140.47" y="930.0" width="42.16" height="21.5" fill="#e61919"/>
<rect x="1140.47" y="911.3" width="42.16" height="18.7" fill="#e68019"/>
<rect x="1140.47" y="890.5" width="42.16" height="20.8" fill="#e5e619"/>
<rect x="1140.47" y="865.0" width="42.16" height="25.5" fill="#80e619"/>
<rect x="1140.47" y="839.2" width="42.16" height="25.8" fill="#19e619"/>
<rect x="1140.47" y="805.5" width="42.16" height="33.7" fill="#19e680"/>
<rect x="1140.47" y="786.7" width="42.16" height="18.8" fill="#19e5e6"/>
<rect x="1140.47" y="762.0" width="42.16" height="24.7" fill="#197fe6"/>
<rect x="1140.47" y="753.0" width="42.16" height="9.0" fill="#1919e6"/>
<rect x="1140.47" y="722.8" width="42.16" height="30.2" fill="#7f19e6"/>
<rect x="1140.47" y="689.7" width="42.16" height="33.1" fill="#e619e5"/>
<rect x="1140.47" y="675.0" width="42.16" height="14.7" fill="#e61980"/>
<rect x="1193.17" y="917.8" width="42.16" height="33.7" fill="#e61919"/>
<rect x="1193.17" y="896.2" width="42.16" height="21.6" fill="#e68019"/>
<rect x="1193.17" y="881.7" width="42.16" height="14.5" fill="#e5e619"/>
<rect x="1193.17" y="864.2" width="42.16" height="17.5" fill="#80e619"/>
<rect x="1193.17" y="845.3" width="42.16" height="18.9" fill="#19e619"/>
<rect x="1193.17" y="837.5" width="42.16" height="7.8" fill="#19e680"/>
<rect x="1193.17" y="812.4" width="42.16" height="25.1" fill="#19e5e6"/>
<rect x="1193.17" y="792.2" width="42.16" height="20.2" fill="#197fe6"/>
<rect x="1193.17" y="770.0" width="42.16" height="22.2" fill="#1919e6"/>
<rect x="1193.17" y="743.8" width="42.16" height="26.2" fill="#7f19e6"/>
<rect x="1193.17" y="730.8" width="42.16" height="13.0" fill="#e619e5"/>
<rect x="1193.17" y="718.8" width="42.16" height="12.0" fill="#e61980"/>
<rect x="1245.87" y="932.0" width="42.16" height="19.5" fill="#e61919"/>
<rect x="1245.87" y="925.8" width="42.16" height="6.2" fill="#e68019"/>
<rect x="1245.87" y="906.7" width="42.16" height="19.1" fill="#e5e619"/>
<rect x="1245.87" y="888.8" width="42.16" height="17.9" fill="#80e619"/>
<rect x="1245.87" y="870.8" width="42.16" height="18.0" fill="#19e619"/>
<rect x="1245.87" y="857.2" width="42.16" height="13.6" fill="#19e680"/>
<rect x="1245.87" y="838.8" width="42.16" height="18.4" fill="#19e5e6"/>
<rect x="1245.87" y="819.0" width="42.16" height="19.8" fill="#197fe6"/>
<rect x="1245.87" y="794.3" width="42.16" height="24.7" fill="#1919e6"/>
<rect x="1245.87" y="764.2" width="42.16" height="30.1" fill="#7f19e6"/>
<rect x="1245.87" y="738.7" width="42.16" height="25.5" fill="#e619e5"/>
<rect x="1245.87" y="717.5" width="42.16" height="21.2" fill="#e61980"/>
<rect x="1298.57" y="934.2" width="42.16" height="17.3" fill="#e61919"/>
<rect x="1298.57" y="917.2" width="42.16" height="17.0" fill="#e68019"/>
<rect x="1298.57" y="892.8" width="42.16" height="24.4" fill="#e5e619"/>
<rect x="1298.57" y="871.2" width="42.16" height="21.6" fill="#80e619"/>
<rect x="1298.57" y="850.8" width="42.16" height="20.4" fill="#19e619"/>
<rect x="1298.57" y="839.7" width="42.16" height="11.1" fill="#19e680"/>
<rect x="1298.57" y="832.0" width="42.16" height="7.7" fill="#19e5e6"/>
<rect x="1298.57" y="809.8" width="42.16" height="22.2" fill="#197fe6"/>
<rect x="1298.57" y="784.2" width="42.16" height="25.6" fill="#1919e6"/>
<rect x="1298.57" y="755.8" width="42.16" height="28.4" fill="#7f19e6"/>
<rect x="1298.57" y="737.8" width="42.16" height="18.0" fill="#e619e5"/>
<rect x="1298.57" y="724.7" width="42.16" height="13.1" fill="#e61980"/>
<rect x="1351.27" y="938.0" width="42.16" height="13.5" fill="#e61919"/>
<rect x="1351.27" y="920.0" width="42.16" height="18.0" fill="#e68019"/>
<rect x="1351.27" y="907.8" width="42.16" height="12.2" fill="#e5e619"/>
<rect x="1351.27" y="882.8" width="42.16" height="25.0" fill="#80e619"/>
<rect x="1351.27" y="873.3" width="42.16" height="9.5" fill="#19e619"/>
<rect x="1351.27" y="853.3" width="42.16" height="20.0" fill="#19e680"/>
<rect x="1351.27" y="838.8" width="42.16" height="14.5" fill="#19e5e6"/>
<rect x="1351.27" y="824.7" width="42.16" height="14.1" fill="#197fe6"/>
<rect x="1351.27" y="807.5" width="42.16" height="17.2" fill="#1919e6"/>
<rect x="1351.27" y="791.2" width="42.16" height="16.3" fill="#7f19e6"/>
<rect x="1351.27" y="777.7" width="42.16" height="13.5" fill="#e619e5"/>
<rect x="1351.27" y="761.3" width="42.16" height="16.4" fill="#e61980"/>
<rect x="1403.97" y="936.7" width="42.16" height="14.8" fill="#e61919"/>
<rect x="1403.97" y="913.3" width="42.16" height="23.4" fill="#e68019"/>
<rect x="1403.97" y="898.0" width="42.16" height="15.3" fill="#e5e619"/>
<rect x="1403.97" y="878.0" width="42.16" height="20.0" fill="#80e619"/>
<rect x="1403.97" y="867.8" width="42.16" height="10.2" fill="#19e619"/>
<rect x="1403.97" y="846.2" width="42.16" height="21.6" fill="#19e680"/>
<rect x="1403.97" y="819.7" width="42.16" height="26.5" fill="#19e5e6"/>
<rect x="1403.97" y="791.7" width="42.16" height="28.0" fill="#197fe6"/>
<rect x="1403.97" y="773.8" width="42.16" height="17.9" fill="#1919e6"/>
<rect x="1403.97" y="754.2" width="42.16" height="19.6" fill="#7f19e6"/>
<rect x="1403.97" y="731.7" width="42.16" height="22.5" fill="#e619e5"/>
<rect x="1403.97" y="707.0" width="42.16" height="24.7" fill="#e61980"/>
<rect x="1456.67" y="939.2" width="42.16" height="12.3" fill="#e61919"/>
<rect x="1456.67" y="928.3" width="42.16" height="10.9" fill="#e68019"/>
<rect x="1456.67" y="909.7" width="42.16" height="18.6" fill="#e5e619"/>
<rect x="1456.67" y="885.8" width="42.16" height="23.9" fill="#80e619"/>
<rect x="1456.67" y="856.3" width="42.16" height="29.5" fill="#19e619"/>
<rect x="1456.67" y="842.2" width="42.16" height="14.1" fill="#19e680"/>
<rect x="1456.67" y="816.7" width="42.16" height="25.5" fill="#19e5e6"/>
<rect x="1456.67" y="801.3" width="42.16" height="15.4" fill="#197fe6"/>
<rect x="1456.67" y="772.2" width="42.16" height="29.1" fill="#1919e6"/>
<rect x="1456.67" y="760.0" width="42.16" height="12.2" fill="#7f19e6"/>
<rect x="1456.67" y="733.0" width="42.16" height="27.0" fill="#e619e5"/>
<rect x="1456.67" y="712.0" width="42.16" height="21.0" fill="#e61980"/>
<rect x="1509.37" y="936.3" width="42.16" height="15.2" fill="#e61919"/>
<rect x="1509.37" y="921.3" width="42.16" height="15.0" fill="#e68019"/>
<rect x="1509.37" y="906.7" width="42.16" height="14.6" fill="#e5e619"/>
<rect x="1509.37" y="885.8" width="42.16" height="20.9" fill="#80e619"/>
<rect x="1509.37" y="868.3" width="42.16" height="17.5" fill="#19e619"/>
<rect x="1509.37" y="854.5" width="42.16" height="13.8" fill="#19e680"/>
<rect x="1509.37" y="842.8" width="42.16" height="11.7" fill="#19e5e6"/>
<rect x="1509.37" y="818.0" width="42.16" height="24.8" fill="#197fe6"/>
<rect x="1509.37" y="801.3" width="42.16" height="16.7" fill="#1919e6"/>
<rect x="1509.37" y="789.0" width="42.16" height="12.3" fill="#7f19e6"/>
<rect x="1509.37" y="777.0" width="42.16" height="12.0" fill="#e619e5"/>
<rect x="1509.37" y="751.2" width="42.16" height="25.8" fill="#e61980"/>
<rect x="1562.07" y="921.2" width="42.16" height="30.3" fill="#e61919"/>
<rect x="1562.07" y="896.2" width="42.16" height="25.0" fill="#e68019"/>
<rect x="1562.07" y="884.7" width="42.16" height="11.5" fill="#e5e619"/>
<rect x="1562.07" y="868.7" width="42.16" height="16.0" fill="#80e619"/>
<rect x="1562.07" y="850.0" width="42.16" height="18.7" fill="#19e619"/>
<rect x="1562.07" y="823.3" width="42.16" height="26.7" fill="#19e680"/>
<rect x="1562.07" y="800.8" width="42.16" height="22.5" fill="#19e5e6"/>
<rect x="1562.07" y="783.7" width="42.16" height="17.1" fill="#197fe6"/>
<rect x="1562.07" y="751.3" width="42.16" height="32.4" fill="#1919e6"/>
<rect x="1562.07" y="740.0" width="42.16" height="11.3" fill="#7f19e6"/>
<rect x="1562.07" y="713.8" width="42.16" height="26.2" fill="#e619e5"/>
<rect x="1562.07" y="703.8" width="42.16" height="10.0" fill="#e61980"/>
<rect x="1614.77" y="933.0" width="42.16" height="18.5" fill="#e61919"/>
<rect x="1614.77" y="910.0" width="42.16" height="23.0" fill="#e68019"/>
<rect x="1614.77" y="884.7" width="42.16" height="25.3" fill="#e5e619"/>
<rect x="1614.77" y="861.3" width="42.16" height="23.4" fill="#80e619"/>
<rect x="1614.77" y="839.2" width="42.16" height="22.1" fill="#19e619"/>
<rect x="1614.77" y="825.3" width="42.16" height="13.9" fill="#19e680"/>
<rect x="1614.77" y="808.8" width="42.16" height="16.5" fill="#19e5e6"/>
<rect x="1614.77" y="797.9" width="42.16" height="10.9" fill="#197fe6"/>
<rect x="1614.77" y="781.8" width="42.16" height="16.1" fill="#1919e6"/>
<rect x="1614.77" y="761.3" width="42.16" height="20.5" fill="#7f19e6"/>
<rect x="1614.77" y="747.8" width="42.16" height="13.5" fill="#e619e5"/>
<rect x="1614.77" y="721.5" width="42.16" height="26.3" fill="#e61980"/>
<rect x="1667.47" y="939.2" width="42.16" height="12.3" fill="#e61919"/>
<rect x="1667.47" y="920.0" width="42.16" height="19.2" fill="#e68019"/>
<rect x="1667.47" y="902.8" width="42.16" height="17.2" fill="#e5e619"/>
<rect x="1667.47" y="879.5" width="42.16" height="23.3" fill="#80e619"/>
<rect x="1667.47" y="860.5" width="42.16" height="19.0" fill="#19e619"/>
<rect x="1667.47" y="840.8" width="42.16" height="19.7" fill="#19e680"/>
<rect x="1667.47" y="824.7" width="42.16" height="16.1" fill="#19e5e6"/>
<rect x="1667.47" y="801.7" width="42.16" height="23.0" fill="#197fe6"/>
<rect x="1667.47" y="792.9" width="42.16" height="8.8" fill="#1919e6"/>
<rect x="1667.47" y="770.0" width="42.16" height="22.9" fill="#7f19e6"/>
<rect x="1667.47" y="746.7" width="42.16" height="23.3" fill="#e619e5"/>
<rect x="1667.47" y="730.0" width="42.16" height="16.7" fill="#e61980"/>
<rect x="1720.17" y="939.2" width="42.16" height="12.3" fill="#e61919"/>
<rect x="1720.17" y="931.2" width="42.16" height="8.0" fill="#e68019"/>
<rect x="1720.17" y="915.8" width="42.16" height="15.4" fill="#e5e619"/>
<rect x="1720.17" y="900.8" width="42.16" height="15.0" fill="#80e619"/>
<rect x="1720.17" y="891.2" width="42.16" height="9.6" fill="#19e619"/>
<rect x="1720.17" y="874.5" width="42.16" height="16.7" fill="#19e680"/>
<rect x="1720.17" y="860.8" width="42.16" height="13.7" fill="#19e5e6"/>
<rect x="1720.17" y="850.0" width="42.16" height="10.8" fill="#197fe6"/>
<rect x="1720.17" y="829.7" width="42.16" height="20.3" fill="#1919e6"/>
<rect x="1720.17" y="812.9" width="42.16" height="16.8" fill="#7f19e6"/>
<rect x="1720.17" y="794.7" width="42.16" height="18.2" fill="#e619e5"/>
<rect x="1720.17" y="778.0" width="42.16" height="16.7" fill="#e61980"/>
<rect x="1772.87" y="937.5" width="42.16" height="14.0" fill="#e61919"/>
<rect x="1772.87" y="914.2" width="42.16" height="23.3" fill="#e68019"/>
<rect x="1772.87" y="885.8" width="42.16" height="28.4" fill="#e5e619"/>
<rect x="1772.87" y="867.8" width="42.16" height="18.0" fill="#80e619"/>
<rect x="1772.87" y="848.3" width="42.16" height="19.5" fill="#19e619"/>
<rect x="1772.87" y="829.5" width="42.16" height="18.8" fill="#19e680"/>
<rect x="1772.87" y="805.7" width="42.16" height="23.8" fill="#19e5e6"/>
<rect x="1772.87" y="784.2" width="42.16" height="21.5" fill="#197fe6"/>
<rect x="1772.87" y="761.7" width="42.16" height="22.5" fill="#1919e6"/>
<rect x="1772.87" y="743.8" width="42.16" height="17.9" fill="#7f19e6"/>
<rect x="1772.87" y="719.7" width="42.16" height="24.1" fill="#e619e5"/>
<rect x="1772.87" y="698.0" width="42.16" height="21.7" fill="#e61980"/>
<rect x="1825.57" y="933.7" width="42.16" height="17.8" fill="#e61919"/>
<rect x="1825.57" y="906.3" width="42.16" height="27.4" fill="#e68019"/>
<rect x="1825.57" y="877.5" width="42.16" height="28.8" fill="#e5e619"/>
<rect x="1825.57" y="845.8" width="42.16" height="31.7" fill="#80e619"/>
<rect x="1825.57" y="821.3" width="42.16" height="24.5" fill="#19e619"/>
<rect x="1825.57" y="807.4" width="42.16" height="13.9" fill="#19e680"/>
<rect x="1825.57" y="782.5" width="42.16" height="24.9" fill="#19e5e6"/>
<rect x="1825.57" y="752.2" width="42.16" height="30.3" fill="#197fe6"/>
<rect x="1825.57" y="725.0" width="42.16" height="27.2" fill="#1919e6"/>
<rect x="1825.57" y="709.7" width="42.16" height="15.3" fill="#7f19e6"/>
<rect x="1825.57" y="683.8" width="42.16" height="25.9" fill="#e619e5"/>
<rect x="1825.57" y="666.3" width="42.16" height="17.5" fill="#e61980"/>
<text x="318.8" y="978" text-anchor="middle" fill="#828282">20 Apr 2025</text>
<text x="424.1" y="978" text-anchor="middle" fill="#828282">22 Apr 2025</text>
<text x="529.5" y="978" text-anchor="middle" fill="#828282">24 Apr 2025</text>
<text x="635.0" y="978" text-anchor="middle" fill="#828282">26 Apr 2025</text>
<text x="740.4" y="978" text-anchor="middle" fill="#828282">28 Apr 2025</text>
<text x="845.8" y="978" text-anchor="middle" fill="#828282">30 Apr 2025</text>
<text x="951.2" y="978" text-anchor="middle" fill="#828282">02 May 2025</text>
<text x="1056.6" y="978" text-anchor="middle" fill="#828282">04 May 2025</text>
<text x="1162.0" y="978" text-anchor="middle" fill="#828282">06 May 2025</text>
<text x="1267.3" y="978" text-anchor="middle" fill="#828282">08 May 2025</text>
<text x="1372.8" y="978" text-anchor="middle" fill="#828282">10 May 2025</text>
<text x="1478.2" y="978" text-anchor="middle" fill="#828282">12 May 2025</text>
<text x="1583.6" y="978" text-anchor="middle" fill="#828282">14 May 2025</text>
<text x="1689.0" y="978" text-anchor="middle" fill="#828282">16 May 2025</text>
<text x="1872.7" y="978" text-anchor="end" fill="#828282">19 May 2025</text>
</svg>
<!--/CHART-->
<div id="tt"><div class="t">30 Apr 2025</div>
<div class="r" style="top:44.95px"><i style="background:#e61919"></i><span>Output 1</span><b>3.99W</b></div>
<div class="r" style="top:72.57px"><i style="background:#e68019"></i><span>Output 2</span><b>4.58W</b></div>
<div class="r" style="top:100.19px"><i style="background:#e5e619"></i><span>Output 3</span><b>6.39W</b></div>
<div class="r" style="top:127.81px"><i style="background:#80e619"></i><span>Output 4</span><b>5.31W</b></div>
<div class="r" style="top:155.43px"><i style="background:#19e619"></i><span>Output 5</span><b>5.68W</b></div>
<div class="r" style="top:183.05px"><i style="background:#19e680"></i><span>Output 6</span><b>5.66W</b></div>
<div class="r" style="top:210.67px"><i style="background:#19e5e6"></i><span>Output 7</span><b>3.23W</b></div>
<div class="r" style="top:238.29px"><i style="background:#197fe6"></i><span>Output 8</span><b>4.73W</b></div>
<div class="r" style="top:265.91px"><i style="background:#1919e6"></i><span>Output 9</span><b>5.05W</b></div>
<div class="r" style="top:293.53px"><i style="background:#7f19e6"></i><span>Output 10</span><b>7.37W</b></div>
<div class="r" style="top:321.15px"><i style="background:#e619e5"></i><span>Output 11</span><b>4.2W</b></div>
<div class="r" style="top:348.77px"><i style="background:#e61980"></i><span>Output 12</span><b>6.82W</b></div>
</div>
<div class="btn" style="left:845px"><svg class="ti" style="left:13px" viewBox="0 0 24 24"><path d="M12.5 21h-7.500a2 2 0 0 1 -2 -2v-14a2 2 0 0 1 2 -2h14a2 2 0 0 1 2 2v7.500"/><path d="M3 10h18"/><path d="M10 3v18"/><path d="M19 16v6"/><path d="M22 19l-3 3l-3 -3"/></svg><span style="left:47px">Download CSV data</span></div>
<div class="btn" style="left:1061px"><svg class="ti" style="left:27px" viewBox="0 0 24 24"><path d="M15 8h.01"/><path d="M12.5 21h-6.500a3 3 0 0 1 -3 -3v-12a3 3 0 0 1 3 -3h12a3 3 0 0 1 3 3v6.500"/><path d="M3 16l5 -5c.928 -.893 2.072 -.893 3 0l4 4"/><path d="M14 14l1 -1c.653 -.629 1.413 -.815 2.130 -.559"/><path d="M19 16v6"/><path d="M22 19l-3 3l-3 -3"/></svg><span style="left:61px">Download chart</span></div>
<!--SCROLLBAR-->
<div id="sb"><svg style="top:0" viewBox="0 0 15 15"><polygon points="7.5,5.6 12.3,11 2.7,11" fill="#b0b0b0"/></svg><div class="th"></div><svg style="top:1064px" viewBox="0 0 15 15"><polygon points="7.5,9.4 12.3,4 2.7,4" fill="#b0b0b0"/></svg></div>
</div>
</body>
</html>
